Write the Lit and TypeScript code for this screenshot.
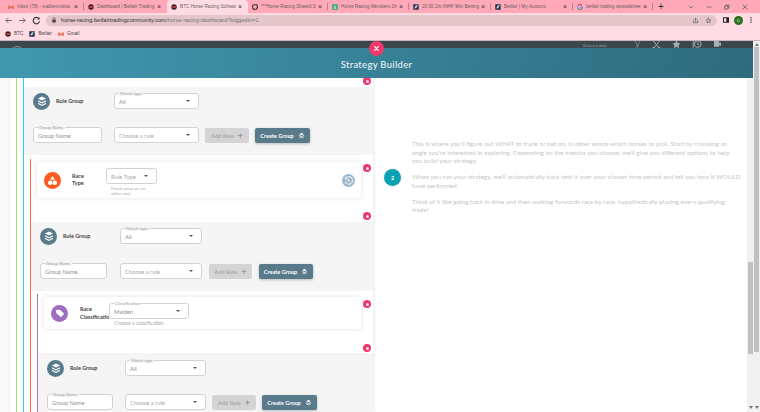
import { LitElement, html, css, svg } from "lit";
import { customElement } from "lit/decorators.js";

const stack = svg`<path d="M12 3l8 4-8 4-8-4z" fill="#fff"/><path d="M4 10.500l8 4 8-4v2.300l-8 4-8-4z" fill="#fff"/><path d="M4 15.500l8 4 8-4v2.300l-8 4-8-4z" fill="#fff"/>`;

const tabsData: [string, string, number][] = [
  ["Inbox (78) - tradtemnistso", "gm", 80],
  ["Dashboard | Betfair Trading", "btc", 83],
  ["BTC Horse Racing Softwar", "btc", 81],
  ["***Horse Racing Shared Si", "gear", 80],
  ["Horse Racing Members Sh", "sheet", 81],
  ["20:00 2m INHF Win Betting", "bf", 82],
  ["Betfair | My Account", "bf", 82],
  ["betfair trading spreadsheet", "g", 80],
];

const delYs = [81, 168, 216, 304, 348];

@customElement("app-root")
export class AppRoot extends LitElement {
  static styles = css`
    :host { display: block; width: 760px; height: 412px; overflow: hidden; font-family: "Lato", "Open Sans", sans-serif; background: #fff; color: #555; }
    * { box-sizing: border-box; }
    svg { display: block; flex: none; }

    .tabs { height: 13px; background: #ffa9b8; display: flex; padding-left: 4px; font: 4.700px "Liberation Sans", sans-serif; color: #555; }
    .tab { display: flex; align-items: center; padding: 0 4px 0 4px; flex: none; white-space: nowrap; position: relative; }
    .tab::after { content: ""; position: absolute; right: 0; top: 3px; bottom: 3px; width: 1px; background: #b98490; }
    .tab.on { background: #ffdce3; border-radius: 4px 4px 0 0; }
    .tab.on::after, .tab.pre::after { display: none; }
    .tab span { flex: 1; overflow: hidden; margin-left: 3px; opacity: .9; }
    .tab b { font: 400 7px "Liberation Sans", sans-serif; color: #333; margin-left: 2px; width: 6px; }
    .fav { width: 6px; height: 6px; flex: none; }
    .plus { margin-left: 5px; font-size: 10px; color: #333; display: flex; align-items: center; width: 10px; }
    .win { margin-left: 19px; display: flex; gap: 10px; align-items: center; }

    .tool { height: 14px; background: #ffdce3; display: flex; align-items: center; padding: 0 5px 0 4px; }
    .nav { display: flex; gap: 5px; }
    .url { width: 674px; height: 11px; margin: 0 5px 0 5px; border-radius: 6px; background: #e4c5ca; display: flex; align-items: center; padding: 0 5px; font: 5.650px "Liberation Sans", sans-serif; color: #777; }
    .url b { font-weight: 400; color: #333; }
    .lock { margin-right: 4px; }
    .url-end { margin-left: auto; display: flex; gap: 6px; }
    .tool-end { display: flex; align-items: center; gap: 4px; margin-left: auto; }
    .avatar { width: 9px; height: 9px; border-radius: 50%; background: #2f6e1f; color: #dfe; font: 4px "Liberation Sans", sans-serif; display: flex; align-items: center; justify-content: center; }

    .marks { height: 14px; background: #ffdce3; border-bottom: 1px solid #c9b5b9; display: flex; align-items: center; padding-left: 5px; font: 4.700px "Liberation Sans", sans-serif; color: #444; gap: 6px; }
    .marks div { display: flex; align-items: center; gap: 3px; }

    .page { display: flex; height: 371px; }
    .main { width: 753px; flex: none; display: flex; flex-direction: column; }
    .outer { flex: 1; background: #f1f1f1; display: flex; flex-direction: column; align-items: center; padding: 2px 0 3px; }
    .outer-thumb { width: 5px; height: 305px; background: #c1c1c1; margin-top: 1px; }
    .up, .down { width: 0; height: 0; border: 2px solid transparent; flex: none; }
    .up { border-bottom: 3px solid #777; border-top: 0; }
    .down { border-top: 3px solid #777; border-bottom: 0; margin-top: auto; }

    .dark { height: 7px; background: #3a474d; display: flex; align-items: flex-start; color: #9aa4a8; font-size: 4.300px; overflow: hidden; flex: none; padding-left: 10px; }
    .disc { width: 14px; height: 14px; border-radius: 50%; border: 1px solid #8f999d; margin-top: 5px; flex: none; }
    .date { margin-left: 559px; line-height: 7px; margin-top: 1px; white-space: nowrap; }
    .dicons { display: flex; gap: 11px; margin-left: 27px; }

    .modal { flex: 1; position: relative; display: flex; flex-direction: column; min-height: 0; }
    .close { position: absolute; left: 369px; top: -7px; width: 15px; height: 15px; border-radius: 50%; background: #f0386b; display: flex; align-items: center; justify-content: center; }
    .head { height: 30px; flex: none; background: linear-gradient(100deg, #4098b0, #2f6b7d); color: #e9f2f4; display: flex; align-items: center; justify-content: center; font-size: 9.500px; letter-spacing: .3px; font-weight: 500; padding-top: 2px; }
    .body { display: flex; flex: 1; min-height: 0; }

    .left { width: 376px; flex: none; padding-left: 10px; background: #fafafa; overflow: hidden; }
    .sheet-l { background: #fff; height: 100%; padding-left: 6px; width: 363px; position: relative; overflow: hidden; box-shadow: 0 0 3px #e4e4e4; }
    .l1 { border-left: 1px solid #a8dc6c; height: 100%; padding-left: 6px; }
    .l2 { border-left: 1px solid #36cfe6; height: 100%; padding-top: 9px; }
    .l3 { border-left: 1px solid #ff6a3d; margin: 4px 0 0 6px; padding: 3px 0 0 6px; }
    .l4 { border-left: 1px solid #a675c4; margin: 3px 0 0 0; padding: 3px 0 0 6px; }
    .pull { margin-left: -6px; }

    .group { background: #f5f5f5; padding: 6px 0 0 9px; }
    .gtop { display: flex; align-items: center; height: 16px; }
    .gicon { width: 17px; height: 17px; border-radius: 50%; background: #587a8a; display: flex; align-items: center; justify-content: center; margin-right: 6px; flex: none; }
    .gtitle { font-size: 5.500px; font-weight: 700; color: #444; flex: none; white-space: nowrap; }
    .grow { display: flex; align-items: center; }
    .field { border: 1px solid #d2d2d2; border-radius: 3px; background: #fff; height: 16px; display: flex; align-items: center; padding: 0 8px 0 4px; justify-content: space-between; font-size: 5.800px; color: #8f8f8f; position: relative; flex: none; white-space: nowrap; }
    .field.ph { color: #aaa; }
    .field i { font-style: normal; position: absolute; left: 4px; top: -3px; background: #f5f5f5; padding: 0 1px; font-size: 4.400px; color: #999; line-height: 5px; }
    .field i.w { background: #fff; }
    .caret { width: 0; height: 0; border: 2px solid transparent; border-top: 2.500px solid #555; border-bottom: 0; }
    .btn { height: 15px; border-radius: 2px; display: flex; align-items: center; justify-content: center; gap: 4px; font-size: 5.600px; font-weight: 700; flex: none; white-space: nowrap; }
    .add { background: #d4d4d4; color: #a9a9a9; }
    .addp { font-size: 9px; line-height: 9px; color: #9a9a9a; }
    .create { background: #587a8a; color: #fff; box-shadow: 0 1px 3px #bbb; }

    .del { position: absolute; left: 353px; width: 8px; height: 8px; border-radius: 50%; background: #f0386b; box-shadow: 0 0 3px #fff; display: flex; align-items: center; justify-content: center; z-index: 1; }
    .del::after { content: ""; width: 3px; height: 3px; border-radius: 50%; background: #fff; opacity: .85; }

    .rule { background: #fff; border-radius: 3px; box-shadow: 0 0 5px #e2e2e2; display: flex; align-items: center; position: relative; padding-left: 7px; }
    .r1 { width: 324px; height: 36px; }
    .r2 { width: 317px; height: 32px; }
    .ricon { width: 17px; height: 17px; border-radius: 50%; display: flex; align-items: center; justify-content: center; flex: none; }
    .orange { background: #ff5a1f; margin-right: 11px; }
    .purple { background: #a06cc0; margin-right: 12px; }
    .rtitle { font-size: 5.500px; font-weight: 700; color: #444; line-height: 7.500px; flex: none; }
    .t1 { width: 34px; }
    .t2 { width: 29px; overflow: hidden; white-space: nowrap; line-height: 8px; }
    .rcol { align-self: flex-start; padding-top: 6px; flex: none; }
    .hint { color: #aaa; }
    .h1 { font-size: 4.600px; line-height: 4.700px; margin: 2px 0 0 5px; width: 42px; }
    .h2 { font-size: 5px; line-height: 6px; margin: 1px 0 0 5px; white-space: nowrap; }
    .hist { margin-left: auto; margin-right: 6px; width: 13px; height: 13px; border-radius: 50%; background: #9db8cc; display: flex; align-items: center; justify-content: center; }
    .s1 { height: 24px; }

    .right { flex: 1; display: flex; align-items: center; padding: 0 0 135px 8px; background: #fff; }
    .num { width: 17px; height: 17px; border-radius: 50%; background: #0aa1b5; color: #fff; font-size: 5.500px; font-weight: 700; display: flex; align-items: center; justify-content: center; box-shadow: 0 0 3px #ddd; flex: none; margin-right: 11px; }
    .copy { width: 335px; flex: none; color: #c6c6c6; font-size: 6.400px; line-height: 8.300px; }
    .copy p { margin: 0 0 8px; }
    .copy p:last-child { margin: 0; }
    .inner { width: 6px; flex: none; background: #f1f1f1; padding: 184px 0 3px 1px; display: flex; flex-direction: column; align-items: center; }
    .inner-thumb { height: 92px; width: 5px; flex: none; background: #c1c1c1; }
  `;

  private fav(k: string) {
    if (k === "gm")
      return html`<svg class="fav" viewBox="0 0 24 24"><path d="M2 5v15h5V10l5 4 5-4v10h5V5l-10 7z" fill="#d9483b"/><path d="M2 5l10 7 10-7v5l-10 7L2 10z" fill="#e8723a"/></svg>`;
    if (k === "btc")
      return html`<svg class="fav" viewBox="0 0 24 24"><circle cx="12" cy="12" r="11" fill="#3a2226"/><path d="M3 9h18v6H3z" fill="#c9484f"/></svg>`;
    if (k === "gear")
      return html`<svg class="fav" viewBox="0 0 24 24"><circle cx="12" cy="12" r="10" fill="none" stroke="#333" stroke-width="6" stroke-dasharray="4 1"/></svg>`;
    if (k === "sheet")
      return html`<svg class="fav" viewBox="0 0 24 24"><rect x="1" y="1" width="22" height="22" rx="2" fill="#21a464"/><path d="M6 8h12M6 13h12M6 18h12M12 8v10" stroke="#fff" stroke-width="2"/></svg>`;
    if (k === "bf")
      return html`<svg class="fav" viewBox="0 0 24 24"><rect x="1" y="1" width="22" height="22" fill="#27384c"/><path d="M4 17l6-5-3-1 7-6 6 0-6 6 3 1-7 5z" fill="#e4eaf0"/></svg>`;
    return html`<svg class="fav" viewBox="0 0 24 24"><path d="M20 6a10 10 0 1 0 2 6h-10" fill="none" stroke="#4285f4" stroke-width="4"/><path d="M4 6a10 10 0 0 1 16 0" fill="none" stroke="#ea4335" stroke-width="4"/><path d="M3.500 17a10 10 0 0 0 16 2" fill="none" stroke="#34a853" stroke-width="4"/></svg>`;
  }

  private group(o: {
    h: number; top: number; rowGap: number; title: number; input: number; sel: number; g1: number; g2: number; add: number; create: number;
  }) {
    return html`<div class="group" style="height:${o.h}px;padding-top:${o.top}px">
      <div class="gtop">
        <div class="gicon"><svg width="12" height="12" viewBox="0 0 24 24">${stack}</svg></div>
        <div class="gtitle" style="width:${o.title}px">Rule Group</div>
        <div class="field" style="width:${o.sel}px"><i>Match type</i><span>All</span><div class="caret"></div></div>
      </div>
      <div class="grow" style="margin-top:${o.rowGap}px">
        <div class="field" style="width:${o.input}px;margin-right:${o.g1}px"><i>Group Name</i><span>Group Name</span></div>
        <div class="field ph" style="width:${o.sel}px;margin-right:${o.g2}px"><span>Choose a rule</span><div class="caret"></div></div>
        <div class="btn add" style="width:${o.add}px;margin-right:${o.g2}px">Add Rule <span class="addp">+</span></div>
        <div class="btn create" style="width:${o.create}px">Create Group <svg width="7" height="7" viewBox="0 0 24 24">${stack}</svg></div>
      </div>
    </div>`;
  }

  private bar(d: string, w = 8) {
    return html`<svg width="${w}" height="${w}" viewBox="0 0 24 24" fill="none" stroke="#666" stroke-width="2.500" stroke-linecap="round" stroke-linejoin="round"><path d="${d}"/></svg>`;
  }

  render() {
    return html`
      <div class="tabs">
        ${tabsData.map(
          (t, i) => html`<div class="tab ${i === 2 ? "on" : ""} ${i === 1 ? "pre" : ""}" style="width:${t[2]}px">${this.fav(t[1])}<span>${t[0]}</span><b>×</b></div>`
        )}
        <div class="plus">+</div>
        <div class="win">
          ${this.bar("M6 9l6 6 6-6", 8)}
          ${this.bar("M6 12h12", 8)}
          ${this.bar("M6 9h9v9H6zM9 9V6h9v9h-3", 8)}
          ${this.bar("M6 6l12 12M18 6L6 18", 8)}
        </div>
      </div>
      <div class="tool">
        <div class="nav">
          ${this.bar("M20 12H5M11 6l-6 6 6 6", 9)}
          ${this.bar("M4 12h15M13 6l6 6-6 6", 9)}
          <svg width="9" height="9" viewBox="0 0 24 24" fill="none" stroke="#333" stroke-width="3"><path d="M19 8a8.500 8.500 0 1 0 1 6"/><path d="M20 3v6h-6" fill="#333" stroke="none"/></svg>
        </div>
        <div class="url">
          <svg class="lock" width="6" height="6" viewBox="0 0 24 24"><path d="M5 11h14v11H5z" fill="#444"/><path d="M8 11V7a4 4 0 0 1 8 0v4" fill="none" stroke="#444" stroke-width="3"/></svg>
          <div><b>horse-racing.betfairtradingcommunity.com</b>/horse-racing-dashboard?loggedIn=1</div>
          <div class="url-end">
            ${this.bar("M5 12v8h14v-8M12 15V5M8 8l4-4 4 4", 7)}
            ${this.bar("M12 4l2.500 5.500 5.500.5-4 4 1 6-5-3-5 3 1-6-4-4 5.500-.5z", 7)}
          </div>
        </div>
        <div class="tool-end">
          <svg width="8" height="8" viewBox="0 0 24 24"><path d="M3 4h18v16H3zM6 7v10h7V7z" fill="#222" fill-rule="evenodd"/></svg>
          <div class="avatar">D</div>
          <svg width="8" height="8" viewBox="0 0 24 24"><circle cx="12" cy="5" r="2.200" fill="#333"/><circle cx="12" cy="12" r="2.200" fill="#333"/><circle cx="12" cy="19" r="2.200" fill="#333"/></svg>
        </div>
      </div>
      <div class="marks">
        <div>${this.fav("btc")}BTC</div>
        <div>${this.fav("bf")}Betfair</div>
        <div>${this.fav("gm")}Gmail</div>
      </div>
      <div class="page">
        <div class="main">
          <div class="dark">
            <div class="disc"></div>
            <div class="date">Select a date</div>
            <div class="dicons">
              <svg width="7" height="7" viewBox="0 0 24 24" fill="none" stroke="#a6afb3" stroke-width="2"><path d="M3 0l7 11v11l4-2V11l7-11"/></svg>
              <svg width="9" height="9" viewBox="0 0 24 24" fill="none" stroke="#a6afb3" stroke-width="2.500"><path d="M4 0l16 20M4 20L20 0"/><circle cx="4" cy="20" r="3"/><circle cx="20" cy="20" r="3"/></svg>
              <svg width="9" height="9" viewBox="0 0 24 24" fill="#a6afb3"><path d="M12 -2l3.500 7 7.500 1-5.500 5 1.500 8-7-4-7 4 1.500-8L1 6l7.500-1z"/></svg>
              <svg width="10" height="9" viewBox="0 0 24 24" fill="none" stroke="#a6afb3" stroke-width="2.500"><circle cx="14" cy="8" r="9"/><path d="M14 3v6h4M2 0v18"/></svg>
              <svg width="9" height="7" viewBox="0 0 24 24" fill="#a6afb3"><path d="M0 0h18v20H0zM18 8l6-4v14l-6-4z"/></svg>
            </div>
          </div>
          <div class="modal">
            <div class="head">Strategy Builder</div>
            <div class="close"><svg width="7" height="7" viewBox="0 0 24 24" stroke="#fff" stroke-width="3.500" stroke-linecap="round"><path d="M5 5l14 14M19 5L5 19"/></svg></div>
            <div class="body">
              <div class="left">
                <div class="sheet-l">
                  ${delYs.map((y) => html`<div class="del" style="top:${y - 82}px"></div>`)}
                  <div class="l1"><div class="l2">
                    ${this.group({ h: 68, top: 6, rowGap: 18, title: 58, input: 69, sel: 85, g1: 12, g2: 6, add: 44, create: 55 })}
                    <div class="l3">
                      <div class="rule r1">
                        <div class="ricon orange"><svg width="11" height="11" viewBox="0 0 24 24" fill="#fff"><path d="M12 2l5.500 8.500h-11z"/><circle cx="7" cy="17" r="5"/><circle cx="17" cy="17" r="5"/></svg></div>
                        <div class="rtitle t1">Race<br />Type</div>
                        <div class="rcol">
                          <div class="field ph" style="width:51px"><span>Rule Type</span><div class="caret"></div></div>
                          <div class="hint h1">Fixed value or an-other stat</div>
                        </div>
                        <div class="hist"><svg width="9" height="9" viewBox="0 0 24 24" fill="none" stroke="#e6eef3" stroke-width="3"><path d="M4 7a10 10 0 1 1-1 7M4 2v6h6M12 7v6l3 2"/></svg></div>
                      </div>
                      <div class="s1"></div>
                      <div class="pull">
                        ${this.group({ h: 69, top: 6, rowGap: 19, title: 57, input: 67, sel: 82, g1: 13, g2: 7, add: 43, create: 54 })}
                      </div>
                      <div class="l4">
                        <div class="rule r2">
                          <div class="ricon purple"><svg width="10" height="10" viewBox="0 0 24 24" fill="#fff"><path d="M2 5l10-1 10 10-8 8L3 12z"/></svg></div>
                          <div class="rtitle t2">Race<br />Classification</div>
                          <div class="rcol">
                            <div class="field" style="width:80px"><i class="w">Classification</i><span>Maiden</span><div class="caret"></div></div>
                            <div class="hint h2">Choose a classification</div>
                          </div>
                        </div>
                        <div class="s1"></div>
                        <div class="pull">
                          ${this.group({ h: 70, top: 7, rowGap: 18, title: 55, input: 66, sel: 81, g1: 12, g2: 6, add: 44, create: 55 })}
                        </div>
                      </div>
                    </div>
                  </div></div>
                </div>
              </div>
              <div class="right">
                <div class="num">2</div>
                <div class="copy">
                  <p>This is where you'll figure out WHAT to trade or bet on, in other words which horses to pick. Start by choosing an<br />angle you're interested in exploring. Depending on the metrics you choose, we'll give you different options to help<br />you build your strategy.</p>
                  <p>When you run your strategy, we'll automatically back-test it over your chosen time period and tell you how it WOULD<br />have performed.</p>
                  <p>Think of it like going back in time and then walking forwards race by race, hypothetically placing every qualifying<br />trade!</p>
                </div>
              </div>
              <div class="inner"><div class="inner-thumb"></div><div class="down"></div></div>
            </div>
          </div>
        </div>
        <div class="outer"><div class="up"></div><div class="outer-thumb"></div><div class="down"></div></div>
      </div>
    `;
  }
}
